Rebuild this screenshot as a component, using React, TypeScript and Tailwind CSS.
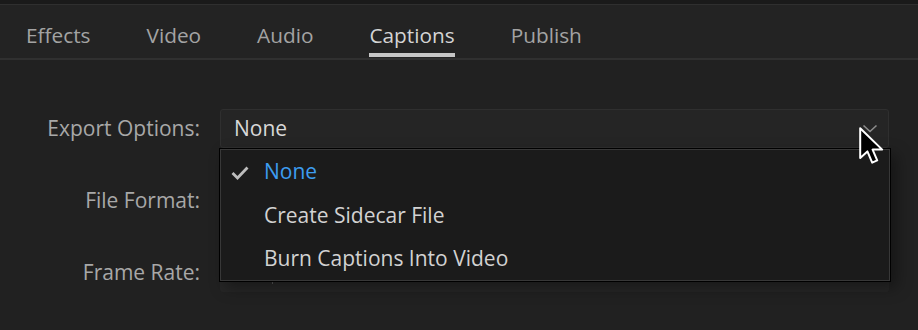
import React from 'react';

const TABS = ['Effects', 'Video', 'Audio', 'Captions', 'Publish'];
const OPTIONS = ['None', 'Create Sidecar File', 'Burn Captions Into Video'];

const Chevron = () => (
  <svg width="16" height="10" viewBox="0 0 16 10" className="text-[#8c8c8c]">
    <path d="M1.5 1.5 L8 7.5 L14.5 1.5" fill="none" stroke="currentColor" strokeWidth="1.6" />
  </svg>
);

const Check = () => (
  <svg width="18" height="14" viewBox="0 0 18 14" className="text-[#bdbdbd]">
    <path d="M1.5 7 L6.5 12 L16.5 1.5" fill="none" stroke="currentColor" strokeWidth="2.8" />
  </svg>
);

const Cursor = () => (
  <svg width="26" height="38" viewBox="0 0 13 19">
    <path
      d="M0.6 0.6 L0.6 15.5 L4.2 12.2 L6.6 17.8 L9.1 16.7 L6.8 11.3 L11.6 11.3 Z"
      fill="#000"
      stroke="#fff"
      strokeWidth="1"
      strokeLinejoin="round"
    />
  </svg>
);

export default function App() {
  return (
    <div
      className="relative w-[918px] h-[330px] overflow-hidden bg-[#212121] text-[#a9a9a9]"
      style={{ fontFamily: '"Open Sans", "Noto Sans", sans-serif' }}
    >
      {/* top strip */}
      <div className="h-[5px] bg-[#1a1a1a] border-b border-[#2f2f2f]" />

      {/* Tab bar */}
      <div className="h-[55px] bg-[#232323] border-b-2 border-[#303030] flex items-start pl-[26px] gap-[56px]">
        {TABS.map((t) => (
          <div key={t} className="flex flex-col pt-[16px]">
            <span className={`text-[20.8px] leading-[28px] ${t === 'Captions' ? 'text-[#d4d4d4]' : 'text-[#a3a3a3]'}`}>{t}</span>
            {t === 'Captions' && <div className="mt-[4px] h-[4px] bg-[#c6c6c6]" />}
          </div>
        ))}
      </div>

      {/* Form */}
      <div className="grid grid-cols-[200px_669px] gap-x-[20px] gap-y-[33px] pt-[49px] items-center">
        <span className="text-right text-[21px] text-[#a8a8a8]">Export Options:</span>
        <div className="h-[39px] rounded-[3px] bg-[#252525] border border-[#2f2f2f] flex items-center justify-between pl-[13px] pr-[10px]">
          <span className="text-[21px] text-[#d8d8d8]">None</span>
          <Chevron />
        </div>

        <span className="text-right text-[21px] text-[#a8a8a8]">File Format:</span>
        <div className="h-[39px] rounded-[3px] bg-[#252525] border border-[#2f2f2f]" />

        <span className="text-right text-[21px] text-[#a8a8a8]">Frame Rate:</span>
        <div className="relative h-[39px] rounded-[3px] bg-[#262626]">
          <div className="absolute left-[52px] bottom-[8px] w-[1px] h-[3px] bg-[#555]" />
        </div>
      </div>

      {/* Dropdown menu */}
      <div className="absolute left-[219px] top-[148px] w-[672px] h-[134px] border border-black bg-[#1b1b1b] shadow-[6px_6px_14px_rgba(0,0,0,0.35)]">
        <div className="h-full border border-[#383838]">
          {OPTIONS.map((o, i) => (
            <div key={o} className="h-[43.5px] flex items-center">
              <div className="w-[43px] flex justify-end pr-[15px] pt-[2px]">{i === 0 && <Check />}</div>
              <span className={`text-[21px] ${i === 0 ? 'text-[#3d9df0]' : 'text-[#d2d2d2]'}`}>{o}</span>
            </div>
          ))}
        </div>
      </div>

      {/* Mouse pointer */}
      <div className="absolute left-[859px] top-[127px]">
        <Cursor />
      </div>
    </div>
  );
}
